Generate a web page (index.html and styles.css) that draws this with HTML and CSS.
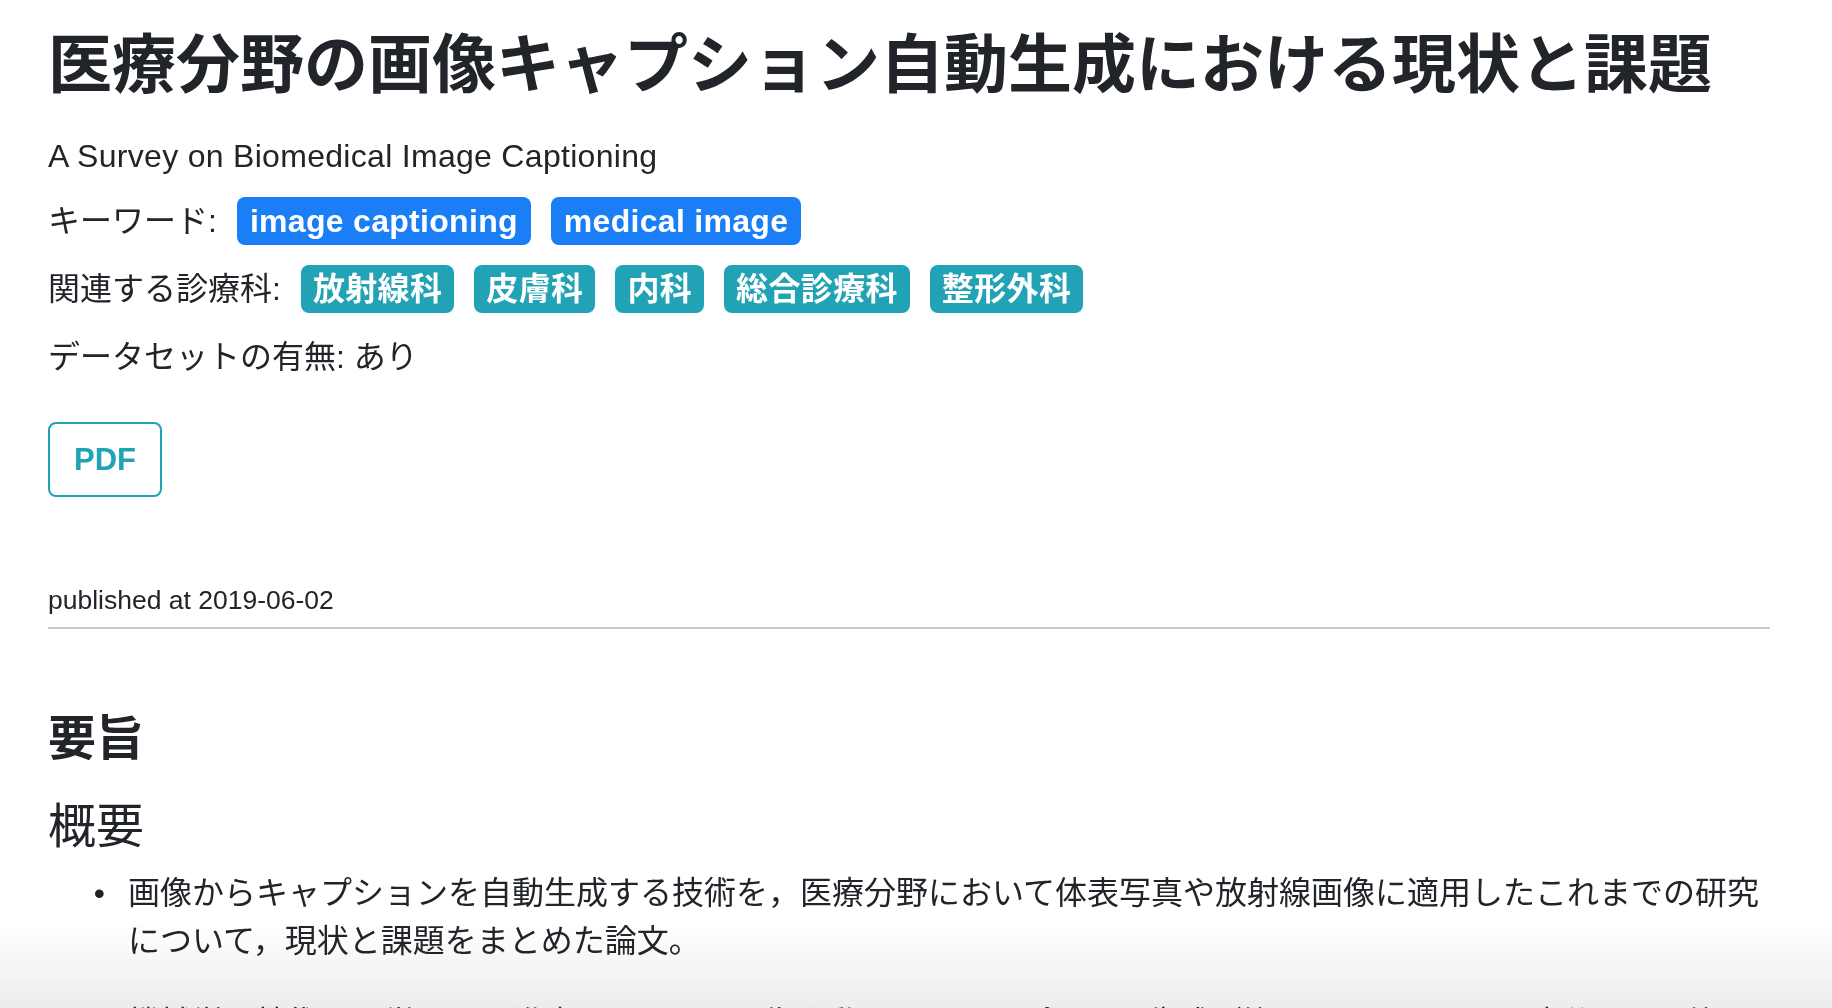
FILE: index.html
```html
<!DOCTYPE html>
<html lang="ja">
<head>
<meta charset="utf-8">
<title>医療分野の画像キャプション自動生成における現状と課題</title>
<link rel="stylesheet" href="styles.css">
</head>
<body>
<div class="fade"></div>
<main class="container">
  <h1 class="title">医療分野の画像キャプション自動生成における現状と課題</h1>
  <p class="subtitle">A Survey on Biomedical Image Captioning</p>
  <div class="meta-row">
    <span class="label">キーワード:</span>
    <span class="badge badge-primary">image captioning</span>
    <span class="badge badge-primary">medical image</span>
  </div>
  <div class="meta-row">
    <span class="label">関連する診療科:</span>
    <span class="badge badge-info">放射線科</span>
    <span class="badge badge-info">皮膚科</span>
    <span class="badge badge-info">内科</span>
    <span class="badge badge-info">総合診療科</span>
    <span class="badge badge-info">整形外科</span>
  </div>
  <p class="meta-text">データセットの有無: あり</p>
  <div class="actions">
    <a class="btn-pdf" href="#">PDF</a>
  </div>
  <p class="published">published at 2019-06-02</p>
  <hr class="divider">
  <h2 class="section-title">要旨</h2>
  <h3 class="subsection-title">概要</h3>
  <ul class="points">
    <li>画像からキャプションを自動生成する技術を，医療分野において体表写真や放射線画像に適用したこれまでの研究について，現状と課題をまとめた論文。</li>
    <li>機械学習技術の目覚ましい進歩によって，画像や動画へのキャプション生成が注目されてきた。医療分野でも注目されており，研究が進められている。</li>
  </ul>
</main>
</body>
</html>
```
FILE: styles.css
```css
html {
  margin: 0;
  padding: 0;
  background: #ffffff;
}

body {
  margin: 0;
  padding: 0;
  font-family: "Liberation Sans", "Noto Sans CJK JP", sans-serif;
  color: #212529;
  font-size: 32px;
  line-height: 48px;
  overflow: hidden;
}

.container {
  padding: 21px 62px 0 48px;
}

.title {
  margin: 0 0 35px;
  font-family: "Noto Sans CJK JP", sans-serif;
  font-size: 64px;
  line-height: 76px;
  font-weight: 700;
}

.subtitle {
  margin: 0 0 17px;
  font-size: 32px;
  line-height: 48px;
  letter-spacing: 0.3px;
}

.meta-row {
  display: flex;
  align-items: center;
  gap: 20px;
  height: 48px;
  margin-bottom: 20px;
}

.label {
  white-space: nowrap;
}

.badge {
  display: inline-block;
  font-weight: 700;
  font-size: 32px;
  line-height: 32px;
  padding: 8px 12px;
  border-radius: 8px;
  color: #ffffff;
  white-space: nowrap;
}

.badge-primary {
  background: #1a7ff7;
  padding: 8px 13px;
  letter-spacing: 0.3px;
}

.badge-info {
  background: #22a2b5;
  letter-spacing: 0.35px;
}

.meta-text {
  margin: 1px 0 0;
  line-height: 48px;
}

.actions {
  margin-top: 41px;
  display: flex;
}

.btn-pdf {
  display: inline-block;
  font-size: 31px;
  line-height: 45px;
  font-weight: 700;
  color: #22a2b5;
  text-decoration: none;
  border: 2px solid #22a2b5;
  border-radius: 8px;
  padding: 13px 24px;
}

.published {
  margin: 84px 0 0;
  font-size: 26.5px;
  line-height: 38px;
}

.divider {
  margin: 8px 0 0;
  border: 0;
  border-top: 2px solid #c9c9c9;
  height: 0;
}

.section-title {
  margin: 76px 0 0;
  font-family: "Noto Sans CJK JP", sans-serif;
  font-size: 48px;
  line-height: 58px;
  font-weight: 700;
}

.subsection-title {
  margin: 30px 0 0;
  font-family: "Noto Sans CJK JP", sans-serif;
  font-size: 48px;
  line-height: 58px;
  font-weight: 400;
}

.points {
  margin: 18px 0 0;
  padding-left: 80px;
}

.points li {
  line-height: 48px;
  margin-bottom: 34px;
}

.points li::marker {
  content: "•\00a0\00a0\2006";
}

.fade {
  position: fixed;
  z-index: -1;
  left: 0;
  right: 0;
  bottom: 0;
  height: 84px;
  background: linear-gradient(to bottom, rgba(255, 255, 255, 0), #ececec);
}
```
